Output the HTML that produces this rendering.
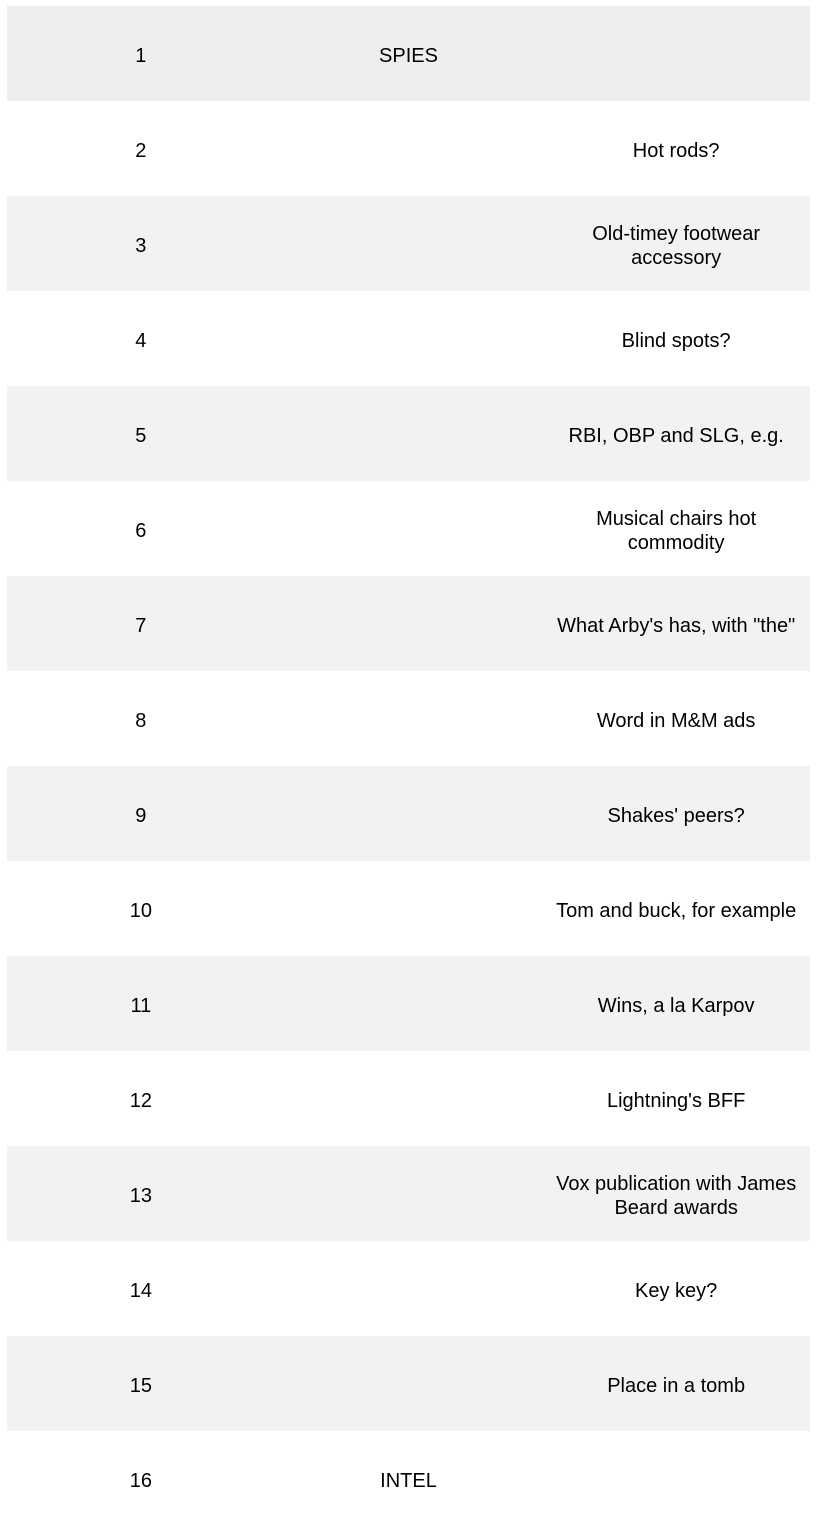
<!DOCTYPE html>
<html><head><style>
body{margin:0;width:822px;height:1524px;overflow:hidden;background:#fff;font-family:"Liberation Sans",Arial,sans-serif;font-size:20px;color:#000}
.r{position:absolute;left:7px;width:803px;height:95px;display:flex}
.r div{width:268px;box-sizing:border-box;display:flex;align-items:center;justify-content:center;text-align:center;line-height:24px;padding-top:4px}
.r div:nth-child(3){padding-left:11px;padding-right:11px}
.g{background:#f2f2f2}
</style></head><body>
<div class="r" style="top:6px;background:#eee"><div>1</div><div>SPIES</div><div></div></div>
<div class="r" style="top:101px"><div>2</div><div></div><div>Hot rods?</div></div>
<div class="r g" style="top:196px"><div>3</div><div></div><div>Old-timey footwear accessory</div></div>
<div class="r" style="top:291px"><div>4</div><div></div><div>Blind spots?</div></div>
<div class="r g" style="top:386px"><div>5</div><div></div><div>RBI, OBP and SLG, e.g.</div></div>
<div class="r" style="top:481px"><div>6</div><div></div><div>Musical chairs hot commodity</div></div>
<div class="r g" style="top:576px"><div>7</div><div></div><div style="white-space:nowrap">What Arby's has, with "the"</div></div>
<div class="r" style="top:671px"><div>8</div><div></div><div>Word in M&amp;M ads</div></div>
<div class="r g" style="top:766px"><div>9</div><div></div><div>Shakes' peers?</div></div>
<div class="r" style="top:861px"><div>10</div><div></div><div style="white-space:nowrap">Tom and buck, for example</div></div>
<div class="r g" style="top:956px"><div>11</div><div></div><div>Wins, a la Karpov</div></div>
<div class="r" style="top:1051px"><div>12</div><div></div><div>Lightning's BFF</div></div>
<div class="r g" style="top:1146px"><div>13</div><div></div><div>Vox publication with James Beard awards</div></div>
<div class="r" style="top:1241px"><div>14</div><div></div><div>Key key?</div></div>
<div class="r g" style="top:1336px"><div>15</div><div></div><div>Place in a tomb</div></div>
<div class="r" style="top:1431px"><div>16</div><div>INTEL</div><div></div></div>
</body></html>
